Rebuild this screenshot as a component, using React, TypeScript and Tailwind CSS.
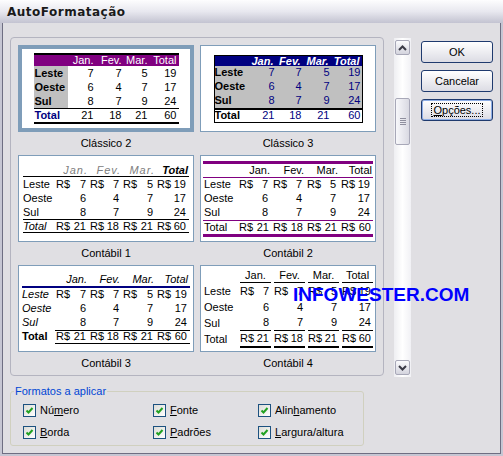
const rows = [
  { name: "Leste", v: ["7", "7", "5", "19"] },
  { name: "Oeste", v: ["6", "4", "7", "17"] },
  { name: "Sul", v: ["8", "7", "9", "24"] },
];
const totals = ["21", "18", "21", "60"];
const months = ["Jan.", "Fev.", "Mar.", "Total"];

function Classico2() {
  return (
    <div className="w-[145px] border-y-2 border-black text-[11px] leading-none">
      <div className="grid h-[11px] grid-cols-[34px_28px_28px_26px_29px] items-center bg-[#800080] text-white">
        <span />
        {months.map((m) => (
          <span key={m} className="pr-[2px] text-right">
            {m}
          </span>
        ))}
      </div>
      {rows.map((r) => (
        <div key={r.name} className="grid h-[14px] grid-cols-[34px_28px_28px_26px_29px]">
          <span className="flex items-center bg-[#c0c0c0] pl-[1px] font-bold">{r.name}</span>
          {r.v.map((x, i) => (
            <span key={i} className="flex items-center justify-end pr-[2px]">
              {x}
            </span>
          ))}
        </div>
      ))}
      <div className="grid h-[14px] grid-cols-[34px_28px_28px_26px_29px] border-t border-black">
        <span className="flex items-center pl-[1px] font-bold text-[#000080]">Total</span>
        {totals.map((x, i) => (
          <span key={i} className="flex items-center justify-end pr-[2px]">
            {x}
          </span>
        ))}
      </div>
    </div>
  );
}

function Classico3() {
  return (
    <div className="w-[149px] border border-black text-[11px] leading-none">
      <div className="grid h-[10px] grid-cols-[36px_25px_27px_28px_31px] items-center bg-[#000080] font-bold italic text-white">
        <span />
        {months.map((m) => (
          <span key={m} className="pr-[2px] text-right">
            {m}
          </span>
        ))}
      </div>
      {rows.map((r) => (
        <div key={r.name} className="grid h-[14px] grid-cols-[36px_25px_27px_28px_31px] bg-[#c0c0c0]">
          <span className="flex items-center font-bold">{r.name}</span>
          {r.v.map((x, i) => (
            <span key={i} className="flex items-center justify-end pr-[1px] text-[#000080]">
              {x}
            </span>
          ))}
        </div>
      ))}
      <div className="grid h-[14px] grid-cols-[36px_25px_27px_28px_31px] border-t-2 border-black bg-white">
        <span className="flex items-center font-bold">Total</span>
        {totals.map((x, i) => (
          <span key={i} className="flex items-center justify-end pr-[1px] text-[#000080]">
            {x}
          </span>
        ))}
      </div>
    </div>
  );
}

function Money({ v, first }: { v: string; first: boolean }) {
  return (
    <span className="flex items-center justify-between pl-[1px] pr-[3px]">
      <span>{first ? "R$" : ""}</span>
      <span>{v}</span>
    </span>
  );
}

function Contabil1() {
  return (
    <div className="w-[166px] text-[11px] leading-none">
      <div className="grid h-[13px] grid-cols-[32px_34px_33px_34px_33px] items-center border-b border-black italic">
        <span />
        <span className="pr-[1px] text-right tracking-[1px] text-[#808080]">Jan.</span>
        <span className="pr-[1px] text-right tracking-[1px] text-[#808080]">Fev.</span>
        <span className="pr-[1px] text-right tracking-[1px] text-[#808080]">Mar.</span>
        <span className="pr-[1px] text-right font-bold">Total</span>
      </div>
      {rows.map((r, ri) => (
        <div key={r.name} className="grid h-[14px] grid-cols-[32px_34px_33px_34px_33px]">
          <span className="flex items-center">{r.name}</span>
          {r.v.map((x, i) => (
            <Money key={i} v={x} first={ri === 0} />
          ))}
        </div>
      ))}
      <div className="grid h-[14px] grid-cols-[32px_34px_33px_34px_33px] border-y border-black">
        <span className="flex items-center italic">Total</span>
        {totals.map((x, i) => (
          <Money key={i} v={x} first />
        ))}
      </div>
    </div>
  );
}

function Contabil2() {
  return (
    <div className="w-[170px] border-y-[3px] border-[#800080] text-[11px] leading-none">
      <div className="grid h-[14px] grid-cols-[34px_34px_34px_34px_34px] items-center border-b border-[#800080]">
        <span />
        {months.map((m) => (
          <span key={m} className="pr-[1px] text-right">
            {m}
          </span>
        ))}
      </div>
      {rows.map((r, ri) => (
        <div key={r.name} className="grid h-[14px] grid-cols-[34px_34px_34px_34px_34px]">
          <span className="flex items-center pl-[1px]">{r.name}</span>
          {r.v.map((x, i) => (
            <span key={i} className="flex items-center justify-between pl-[2px] pr-[3px]">
              <span>{ri === 0 ? "R$" : ""}</span>
              <span>{x}</span>
            </span>
          ))}
        </div>
      ))}
      <div className="grid h-[14px] grid-cols-[34px_34px_34px_34px_34px] border-t border-[#800080]">
        <span className="flex items-center pl-[1px]">Total</span>
        {totals.map((x, i) => (
          <span key={i} className="flex items-center justify-between pl-[2px] pr-[2px]">
            <span>R$</span>
            <span>{x}</span>
          </span>
        ))}
      </div>
    </div>
  );
}

function Contabil3() {
  return (
    <div className="w-[168px] text-[11px] leading-none">
      <div className="grid h-[14px] grid-cols-[33px_34px_33px_34px_34px] items-center border-b-2 border-[#000080] italic">
        <span />
        {months.map((m) => (
          <span key={m} className="pr-[2px] text-right">
            {m}
          </span>
        ))}
      </div>
      {rows.map((r, ri) => (
        <div key={r.name} className="grid h-[14px] grid-cols-[33px_34px_33px_34px_34px]">
          <span className="flex items-center italic">{r.name}</span>
          {r.v.map((x, i) => (
            <Money key={i} v={x} first={ri === 0} />
          ))}
        </div>
      ))}
      <div className="grid h-[14px] grid-cols-[33px_34px_33px_34px_34px]">
        <span className="flex items-center font-bold">Total</span>
        {totals.map((x, i) => (
          <span key={i} className="flex items-center justify-between border-y border-black pl-[1px] pr-[3px]">
            <span>R$</span>
            <span>{x}</span>
          </span>
        ))}
      </div>
    </div>
  );
}

function Contabil4() {
  return (
    <div className="w-[170px] text-[11px] leading-none">
      <div className="grid h-[14px] grid-cols-[34px_31px_31px_31px_31px] gap-x-[3px]">
        <span />
        {months.map((m) => (
          <span key={m} className="flex items-center justify-center border-b border-black">
            {m}
          </span>
        ))}
      </div>
      {rows.map((r, ri) => (
        <div key={r.name} className="grid h-[16px] grid-cols-[34px_31px_31px_31px_31px] gap-x-[3px]">
          <span className="flex items-center pl-[1px]">{r.name}</span>
          {r.v.map((x, i) => (
            <span
              key={i}
              className={
                ri === 2
                  ? "flex items-center justify-between border-b border-black pr-[2px]"
                  : "flex items-center justify-between pr-[2px]"
              }
            >
              <span>{ri === 0 ? "R$" : ""}</span>
              <span>{x}</span>
            </span>
          ))}
        </div>
      ))}
      <div className="grid h-[17px] grid-cols-[34px_31px_31px_31px_31px] gap-x-[3px]">
        <span className="flex items-center pl-[1px]">Total</span>
        {totals.map((x, i) => (
          <span key={i} className="flex items-center justify-between border-b-2 border-black pr-[2px]">
            <span>R$</span>
            <span>{x}</span>
          </span>
        ))}
      </div>
    </div>
  );
}

function Item({ label, selected, children }: { label: string; selected?: boolean; children: React.ReactNode }) {
  return (
    <div className="flex flex-col">
      <div
        className={
          selected
            ? "flex h-[87px] w-[176px] items-center justify-center border-4 border-[#7f9db9] bg-white"
            : "flex h-[87px] w-[176px] items-center justify-center border border-[#7f9db9] bg-white"
        }
      >
        {children}
      </div>
      <div className="flex h-[23px] items-center justify-center text-[11px]">{label}</div>
    </div>
  );
}

function Chevron({ down }: { down?: boolean }) {
  return (
    <svg width="9" height="6" viewBox="0 0 9 6">
      <path
        d={down ? "M1 1 L4.5 4.5 L8 1" : "M1 5 L4.5 1.5 L8 5"}
        fill="none"
        stroke="#3a3a46"
        strokeWidth="2"
      />
    </svg>
  );
}

function Scrollbar() {
  return (
    <div className="mt-[1px] flex h-[339px] w-[17px] flex-col items-center bg-gradient-to-r from-[#eeeef2] via-[#ffffff] to-[#f1f1f5] py-[2px]">
      <div className="flex h-[15px] w-[15px] items-center justify-center rounded-[2px] border border-[#a8a8b8] bg-gradient-to-b from-[#fbfbfd] to-[#d4d4de]">
        <Chevron />
      </div>
      <div className="mt-[43px] flex h-[47px] w-[15px] flex-col items-center justify-center gap-[1px] rounded-[2px] border border-[#a8a8b8] bg-gradient-to-r from-[#f8f8fb] to-[#d9d9e2]">
        <span className="h-[1px] w-[6px] bg-[#8f8f9e]" />
        <span className="h-[1px] w-[6px] bg-[#8f8f9e]" />
        <span className="h-[1px] w-[6px] bg-[#8f8f9e]" />
        <span className="h-[1px] w-[6px] bg-[#8f8f9e]" />
      </div>
      <div className="flex-1" />
      <div className="flex h-[15px] w-[15px] items-center justify-center rounded-[2px] border border-[#a8a8b8] bg-gradient-to-b from-[#fbfbfd] to-[#d4d4de]">
        <Chevron down />
      </div>
    </div>
  );
}

function Check({ children }: { children: React.ReactNode }) {
  return (
    <label className="flex h-[13px] items-center gap-[4px] text-[11px] leading-none">
      <span className="flex h-[13px] w-[13px] items-center justify-center border border-[#1c5180] bg-gradient-to-br from-[#dcdcd7] to-white">
        <svg width="9" height="9" viewBox="0 0 9 9">
          <path d="M1.5 4.5 L3.5 6.5 L7.5 2" fill="none" stroke="#21a121" strokeWidth="2" />
        </svg>
      </span>
      <span>{children}</span>
    </label>
  );
}

const btn =
  "flex h-[22px] w-[72px] items-center justify-center rounded-[3px] border border-[#1f3a6e] bg-gradient-to-b from-white to-[#dcdce4] text-[11px]";

export default function App() {
  return (
    <div className="relative flex h-[456px] w-[503px] flex-col bg-[#c6c6d3] font-['Liberation_Sans',Arial,sans-serif] text-black">
      <div className="flex h-[23px] items-center bg-gradient-to-b from-[#fdfdfe] via-[#e8e8ef] to-[#c3c3d1] px-[7px] font-['DejaVu_Sans',sans-serif] text-[12px] font-bold tracking-[0.5px] text-[#1a1a1a]">
        AutoFormatação
      </div>
      <div className="flex-1 px-[2px] pb-[2px]">
        <div className="flex h-full flex-col border border-t-0 border-[#6e6e82] bg-[#e0dfe3] pl-[7px] pt-[14px]">
          <div className="flex">
            <div className="h-[339px] w-[374px] overflow-hidden rounded-[4px] border border-[#b4b4c0] pl-[7px] pt-[7px]">
              <div className="grid grid-cols-[176px_176px] gap-x-[6px]">
                <Item label="Clássico 2" selected>
                  <Classico2 />
                </Item>
                <Item label="Clássico 3">
                  <Classico3 />
                </Item>
                <Item label="Contábil 1">
                  <Contabil1 />
                </Item>
                <Item label="Contábil 2">
                  <Contabil2 />
                </Item>
                <Item label="Contábil 3">
                  <Contabil3 />
                </Item>
                <Item label="Contábil 4">
                  <Contabil4 />
                </Item>
              </div>
            </div>
            <div className="ml-[10px]">
              <Scrollbar />
            </div>
            <div className="ml-[10px] mt-[4px] flex flex-col gap-[7px]">
              <button className={btn}>OK</button>
              <button className={btn}>Cancelar</button>
              <button className={btn + " shadow-[inset_0_0_0_1px_#8eaee6]"}>
                <span className="border border-dotted border-black px-[1px] leading-[12px]">
                  <span className="underline">O</span>pções...
                </span>
              </button>
            </div>
          </div>
          <fieldset className="mt-[8px] h-[61px] w-[354px] rounded-[3px] border border-[#d0d0bf]">
            <legend className="ml-[3px] px-[1px] text-[11px] leading-[13px] text-[#0046d5]">Formatos a aplicar</legend>
            <div className="grid grid-cols-[130px_105px_auto] gap-y-[9px] pl-[12px] pt-[6px]">
              <Check>
                Nú<span className="underline">m</span>ero
              </Check>
              <Check>
                <span className="underline">F</span>onte
              </Check>
              <Check>
                Alin<span className="underline">h</span>amento
              </Check>
              <Check>
                <span className="underline">B</span>orda
              </Check>
              <Check>
                <span className="underline">P</span>adrões
              </Check>
              <Check>
                <span className="underline">L</span>argura/altura
              </Check>
            </div>
          </fieldset>
        </div>
      </div>
      <div className="absolute left-[293px] top-[285px] text-[19px] font-bold leading-none text-[#0000ff]">
        INFOWESTER.COM
      </div>
    </div>
  );
}
